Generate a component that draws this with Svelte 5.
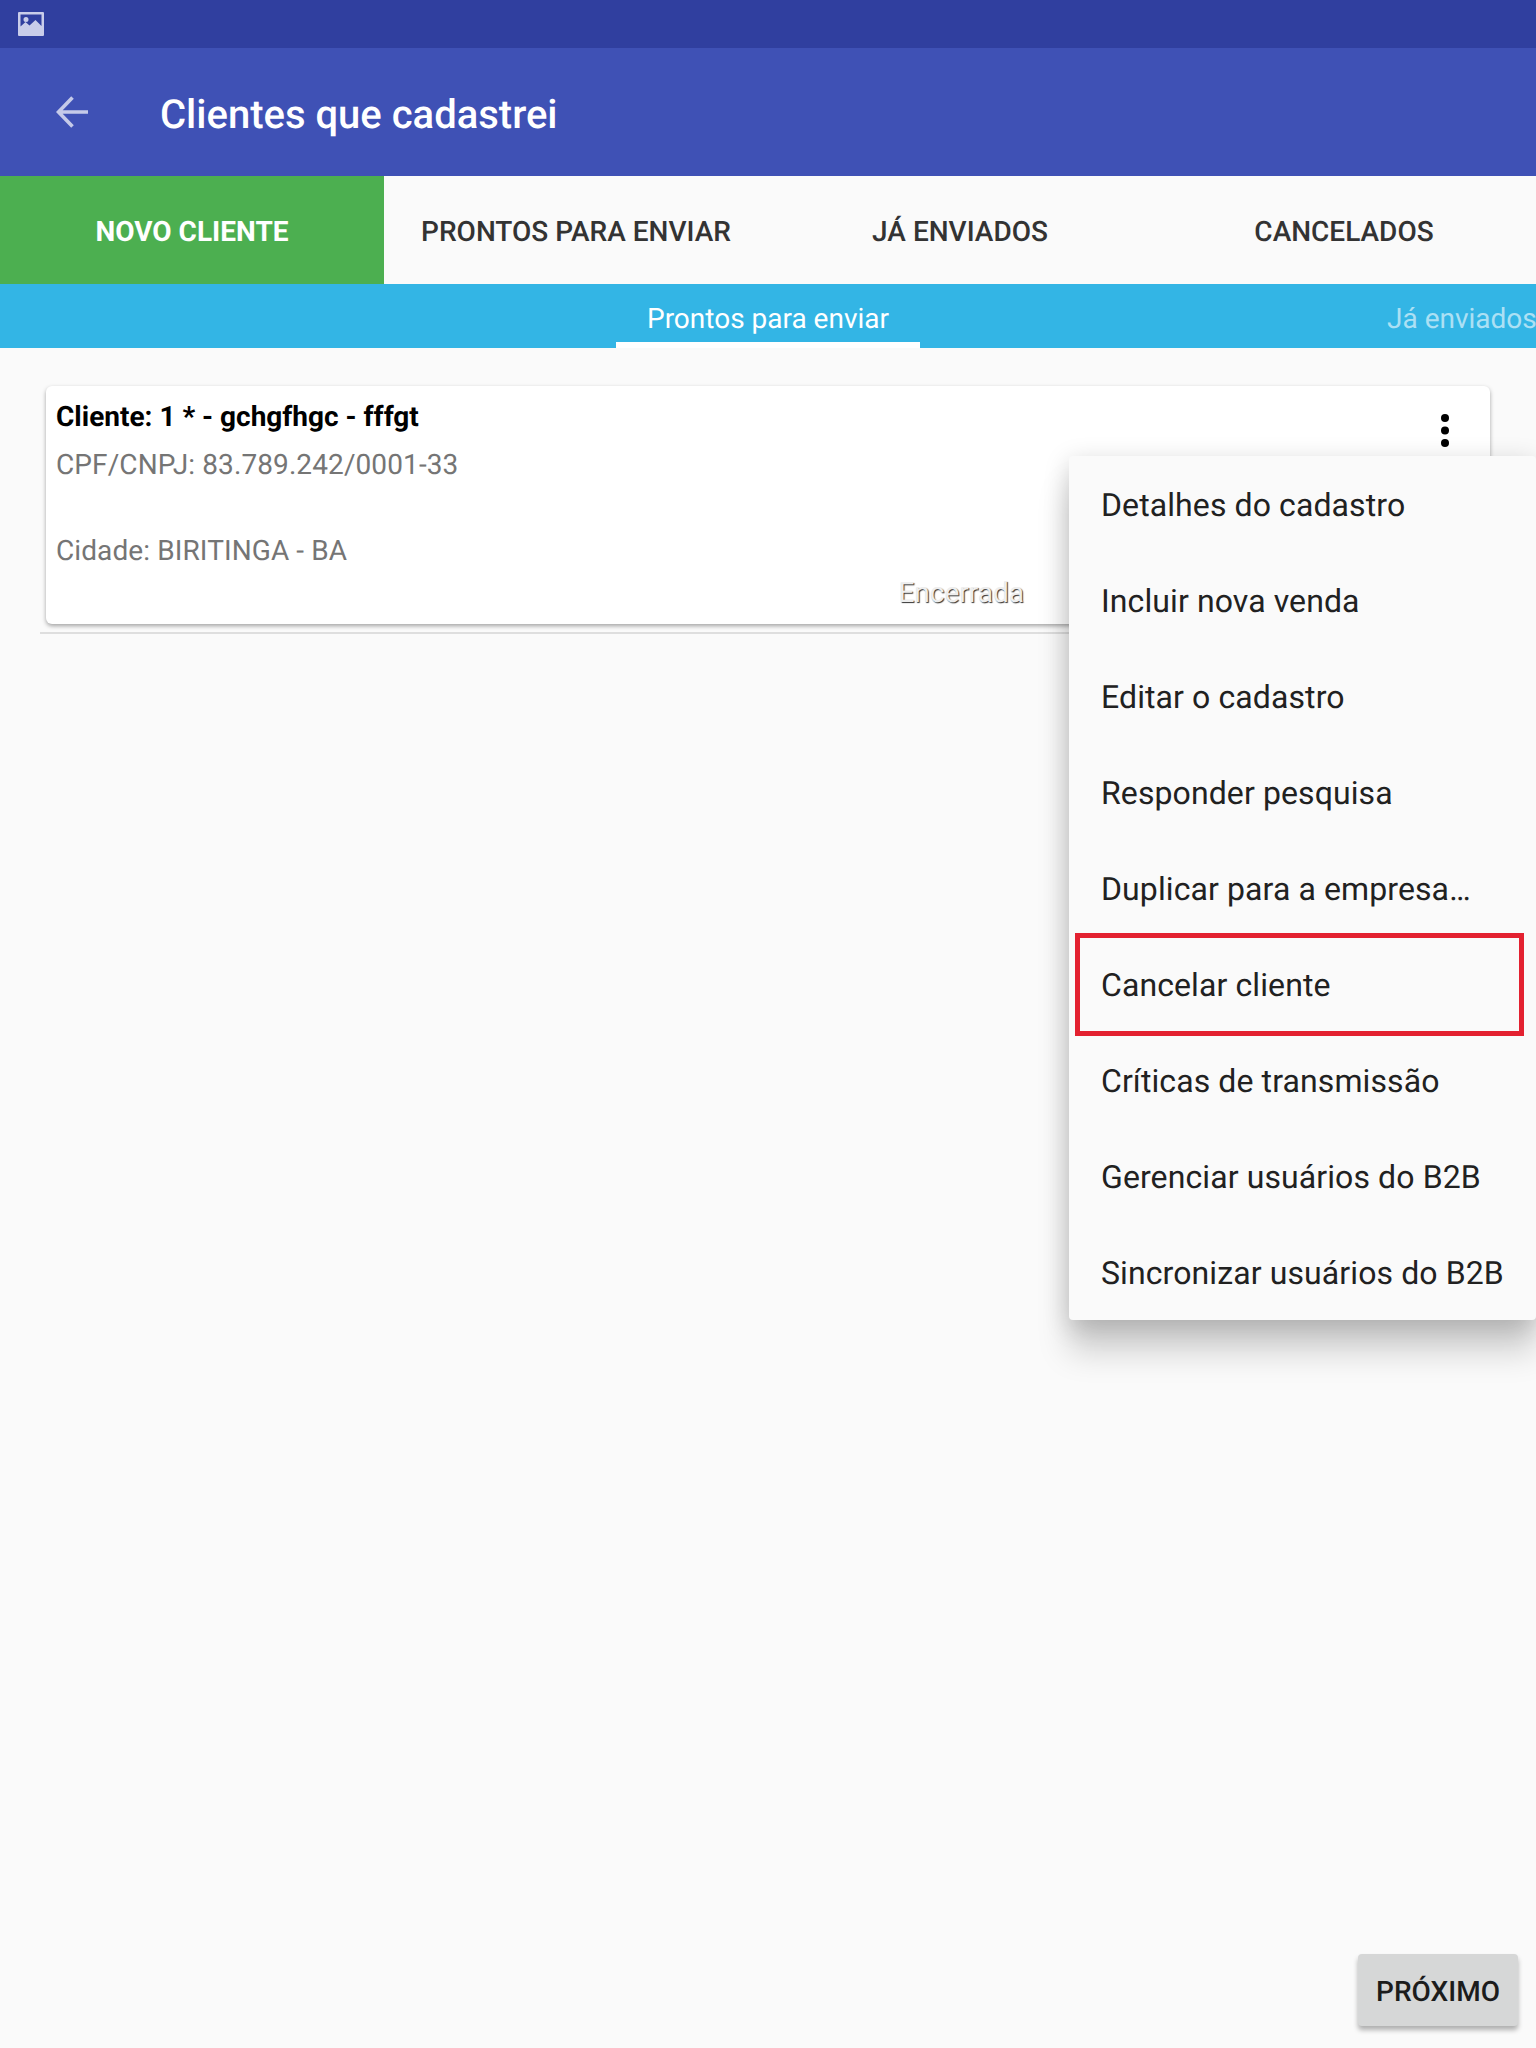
<script>
  const tabs = ['Novo cliente', 'Prontos para enviar', 'Já enviados', 'Cancelados'];
  const menuItems = [
    'Detalhes do cadastro',
    'Incluir nova venda',
    'Editar o cadastro',
    'Responder pesquisa',
    'Duplicar para a empresa…',
    'Cancelar cliente',
    'Críticas de transmissão',
    'Gerenciar usuários do B2B',
    'Sincronizar usuários do B2B'
  ];
</script>

<main class="screen">
  <div class="status-bar">
    <svg class="status-icon" viewBox="0 0 26 24" width="26" height="24">
      <path
        fill="#c9cdea"
        fill-rule="evenodd"
        d="M1 0h24a1 1 0 0 1 1 1v22a1 1 0 0 1-1 1H1a1 1 0 0 1-1-1V1a1 1 0 0 1 1-1zM2.500 2.500v12l5-4.500 4 3.500 6-5.500 6 6V2.500zM8 5a2.500 2.500 0 1 1 0 5 2.500 2.500 0 0 1 0-5z"
      />
    </svg>
  </div>

  <header class="toolbar">
    <svg class="back" viewBox="0 0 32 32" width="32" height="32">
      <path d="M32 16H3M16.500 1.500 2.500 16l14 14.500" fill="none" stroke="#c5cae9" stroke-width="3.600" />
    </svg>
    <h1>Clientes que cadastrei</h1>
  </header>

  <nav class="tabs">
    {#each tabs as tab, i}
      <div class="tab" class:active={i === 0}>{tab}</div>
    {/each}
  </nav>

  <div class="sub-tabs">
    <div class="sub-tab current">Prontos para enviar</div>
    <div class="sub-tab next">Já enviados</div>
  </div>

  <section class="content">
    <article class="card">
      <div class="card-title">
        <strong>Cliente: 1 * - gchgfhgc - fffgt</strong>
        <svg class="dots" viewBox="0 0 8 33" width="8" height="33">
          <circle cx="4" cy="4" r="4" />
          <circle cx="4" cy="16.500" r="4" />
          <circle cx="4" cy="29" r="4" />
        </svg>
      </div>
      <p>CPF/CNPJ: 83.789.242/0001-33</p>
      <p class="blank">&nbsp;</p>
      <p>Cidade: BIRITINGA - BA</p>
      <div class="card-status">Encerrada</div>
    </article>
    <hr />

    <button class="next-button">Próximo</button>
  </section>

  <ul class="menu">
    {#each menuItems as item, i}
      <li class:marked={i === 5}>{item}</li>
    {/each}
  </ul>
</main>

<style>
  :global(body) {
    margin: 0;
  }

  .screen {
    position: relative;
    display: flex;
    flex-direction: column;
    height: 2048px;
    overflow: hidden;
    background: #fafafa;
    font-family: Roboto, "Liberation Sans", sans-serif;
    text-rendering: geometricPrecision;
  }

  .status-bar {
    display: flex;
    align-items: center;
    height: 48px;
    padding-left: 18px;
    background: #303f9f;
  }
  .status-icon {
    display: block;
  }

  .toolbar {
    display: flex;
    align-items: center;
    height: 128px;
    padding-left: 56px;
    background: #3f51b5;
  }
  .back {
    display: block;
  }
  h1 {
    margin: 5px 0 0 72px;
    color: #fff;
    font-size: 40px;
    font-weight: 500;
  }

  .tabs {
    display: grid;
    grid-template-columns: repeat(4, 1fr);
    height: 108px;
  }
  .tab {
    display: flex;
    align-items: center;
    justify-content: center;
    padding-top: 2px;
    color: #333;
    font-size: 28px;
    font-weight: 500;
    text-transform: uppercase;
  }
  .tab.active {
    background: #4caf50;
    color: #fff;
    font-weight: 700;
  }

  .sub-tabs {
    display: flex;
    height: 64px;
    padding-left: 616px;
    overflow: hidden;
    background: #33b5e5;
    white-space: nowrap;
  }
  .sub-tab {
    flex: none;
    box-sizing: border-box;
    height: 64px;
    padding-top: 18px;
    font-size: 28px;
    line-height: 33px;
    text-align: center;
  }
  .sub-tab.current {
    width: 304px;
    border-bottom: 6px solid #fff;
    color: #fff;
  }
  .sub-tab.next {
    margin-left: 467px;
    color: rgba(255, 255, 255, 0.6);
  }

  .content {
    display: flex;
    flex: 1;
    flex-direction: column;
    padding: 38px 18px 22px 40px;
  }

  .card {
    box-sizing: border-box;
    height: 238px;
    margin: 0 28px 0 6px;
    padding: 12px 10px 0;
    border-radius: 6px;
    background: #fff;
    box-shadow: 0 2px 4px rgba(0, 0, 0, 0.35);
    color: #757575;
    font-size: 28px;
    letter-spacing: 0.1px;
  }
  .card-title {
    display: flex;
    justify-content: space-between;
    height: 45px;
    padding-right: 31px;
    color: #000;
    letter-spacing: 0;
    line-height: 38px;
  }
  .dots {
    flex: none;
    margin-top: 16px;
    fill: #000;
  }
  .card p {
    margin: 0;
    line-height: 43px;
  }
  .card-status {
    width: 968px;
    color: #eee;
    letter-spacing: 0;
    line-height: 42px;
    text-align: right;
    text-shadow: 1px 1px 1px #333;
  }

  hr {
    width: 100%;
    height: 2px;
    margin: 8px 0 0;
    border: 0;
    background: #dedede;
  }

  .next-button {
    align-self: flex-end;
    width: 160px;
    height: 72px;
    margin-top: auto;
    padding: 2px 0 0;
    border: 0;
    border-radius: 4px;
    background: #d6d7d7;
    box-shadow: 0 4px 5px rgba(0, 0, 0, 0.3);
    color: #1c1c1c;
    font-family: inherit;
    font-size: 28px;
    font-weight: 500;
    text-rendering: inherit;
    text-transform: uppercase;
  }

  .menu {
    position: absolute;
    top: 456px;
    left: 1069px;
    right: 0;
    margin: 0;
    padding: 0;
    border-radius: 4px;
    background: #fafafa;
    box-shadow: 0 32px 32px rgba(0, 0, 0, 0.17), 0 6px 26px rgba(0, 0, 0, 0.18);
    color: #212121;
    font-size: 32px;
    letter-spacing: 0.1px;
    list-style: none;
  }
  .menu li {
    position: relative;
    height: 96px;
    padding-left: 32px;
    line-height: 98px;
    white-space: nowrap;
  }
  .menu li.marked::after {
    content: '';
    position: absolute;
    inset: -3px 12px -4px 6px;
    border: 5px solid #e32130;
  }
</style>
